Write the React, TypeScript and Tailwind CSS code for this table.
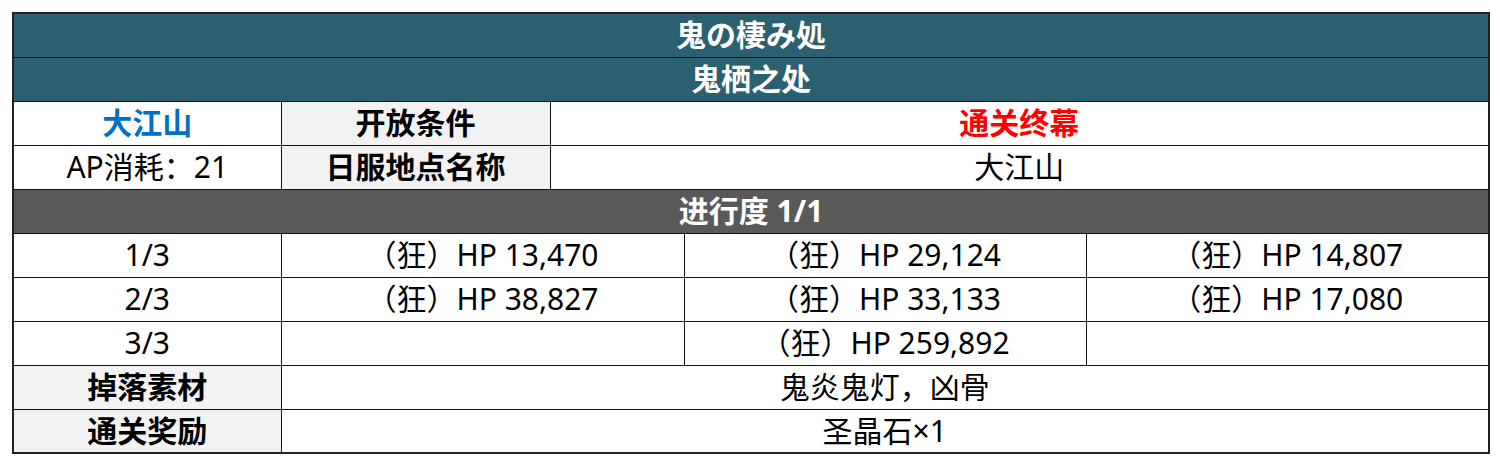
import React from "react";

const waves: string[][] = [
  ["1/3", "（狂）HP 13,470", "（狂）HP 29,124", "（狂）HP 14,807"],
  ["2/3", "（狂）HP 38,827", "（狂）HP 33,133", "（狂）HP 17,080"],
];

const cell = "border border-[#111] text-center align-middle p-0";

const App = () => {
  return (
    <div
      className="p-3 bg-white"
      style={{ fontFamily: '"Noto Sans", "Noto Sans CJK SC", sans-serif' }}
    >
      <table className="table-fixed border-collapse w-[1476px] border-2 border-[#222] text-[30px] leading-none text-black">
        <colgroup>
          <col className="w-[268px]" />
          <col className="w-[269px]" />
          <col className="w-[134px]" />
          <col className="w-[402px]" />
          <col className="w-[403px]" />
        </colgroup>
        <tbody>
          <tr className="h-[44px] bg-[#2b6071] text-white font-bold">
            <td colSpan={5} className={cell}>
              鬼の棲み処
            </td>
          </tr>
          <tr className="h-[44px] bg-[#2b6071] text-white font-bold">
            <td colSpan={5} className={cell}>
              鬼栖之处
            </td>
          </tr>
          <tr className="h-[44px]">
            <td className={`${cell} font-bold text-[#0070c0]`}>大江山</td>
            <td className={`${cell} font-bold bg-[#f2f2f2]`}>开放条件</td>
            <td colSpan={3} className={`${cell} font-bold text-[#ff0000]`}>
              通关终幕
            </td>
          </tr>
          <tr className="h-[44px]">
            <td className={cell}>AP消耗：21</td>
            <td className={`${cell} font-bold bg-[#f2f2f2]`}>日服地点名称</td>
            <td colSpan={3} className={cell}>
              大江山
            </td>
          </tr>
          <tr className="h-[44px] bg-[#595959] text-white font-bold">
            <td colSpan={5} className={cell}>
              进行度 1/1
            </td>
          </tr>
          {waves.map((row) => (
            <tr key={row[0]} className="h-[44px]">
              <td className={cell}>{row[0]}</td>
              <td colSpan={2} className={cell}>
                {row[1]}
              </td>
              <td className={cell}>{row[2]}</td>
              <td className={cell}>{row[3]}</td>
            </tr>
          ))}
          <tr className="h-[44px]">
            <td className={cell}>3/3</td>
            <td colSpan={2} className={cell}></td>
            <td className={cell}>（狂）HP 259,892</td>
            <td className={cell}></td>
          </tr>
          <tr className="h-[44px]">
            <td className={`${cell} font-bold bg-[#f2f2f2]`}>掉落素材</td>
            <td colSpan={4} className={cell}>
              鬼炎鬼灯，凶骨
            </td>
          </tr>
          <tr className="h-[44px]">
            <td className={`${cell} font-bold bg-[#f2f2f2]`}>通关奖励</td>
            <td colSpan={4} className={cell}>
              圣晶石×1
            </td>
          </tr>
        </tbody>
      </table>
    </div>
  );
};

export default App;
